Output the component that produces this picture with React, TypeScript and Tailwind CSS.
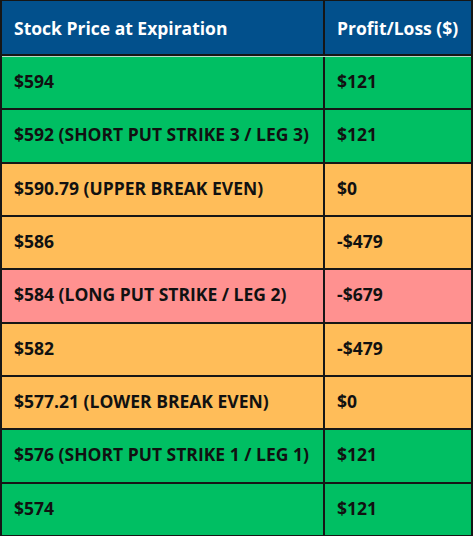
import React from "react";

const rows: { price: string; pl: string; bg: string }[] = [
  { price: "$594", pl: "$121", bg: "bg-[#00bf63]" },
  { price: "$592 (SHORT PUT STRIKE 3 / LEG 3)", pl: "$121", bg: "bg-[#00bf63]" },
  { price: "$590.79 (UPPER BREAK EVEN)", pl: "$0", bg: "bg-[#ffbd59]" },
  { price: "$586", pl: "-$479", bg: "bg-[#ffbd59]" },
  { price: "$584 (LONG PUT STRIKE / LEG 2)", pl: "-$679", bg: "bg-[#ff9190]" },
  { price: "$582", pl: "-$479", bg: "bg-[#ffbd59]" },
  { price: "$577.21 (LOWER BREAK EVEN)", pl: "$0", bg: "bg-[#ffbd59]" },
  { price: "$576 (SHORT PUT STRIKE 1 / LEG 1)", pl: "$121", bg: "bg-[#00bf63]" },
  { price: "$574", pl: "$121", bg: "bg-[#00bf63]" },
];

export default function App() {
  return (
    <div
      className="w-[473px] h-[536px] bg-[#161616] flex flex-col pt-[1px] px-[2px] pb-[1px]"
      style={{ fontFamily: '"Open Sans", "Noto Sans", sans-serif' }}
    >
      <div className="grid grid-cols-[321px_146px] gap-x-[2px] h-[53px] shrink-0">
        <div className="bg-[#02508c] text-white font-bold text-[17.5px] flex items-center pl-[12px] pt-[1px]">
          Stock Price at Expiration
        </div>
        <div className="bg-[#02508c] text-white font-bold text-[17.5px] flex items-center pl-[12px] pt-[1px]">
          Profit/Loss ($)
        </div>
      </div>
      <div className="h-[2px] shrink-0" />
      <div className="h-[1px] shrink-0 bg-[#b9d9c4]" />
      <div className="flex-1 grid grid-cols-[321px_146px] grid-rows-[repeat(9,1fr)] gap-[2px]">
        {rows.map((r, i) => (
          <React.Fragment key={i}>
            <div className={`${r.bg} text-[#111] font-bold text-[17.5px] flex items-center pl-[12px] pb-[3px]`}>
              {r.price}
            </div>
            <div className={`${r.bg} text-[#111] font-bold text-[17.5px] flex items-center pl-[12px] pb-[3px]`}>
              {r.pl}
            </div>
          </React.Fragment>
        ))}
      </div>
    </div>
  );
}
